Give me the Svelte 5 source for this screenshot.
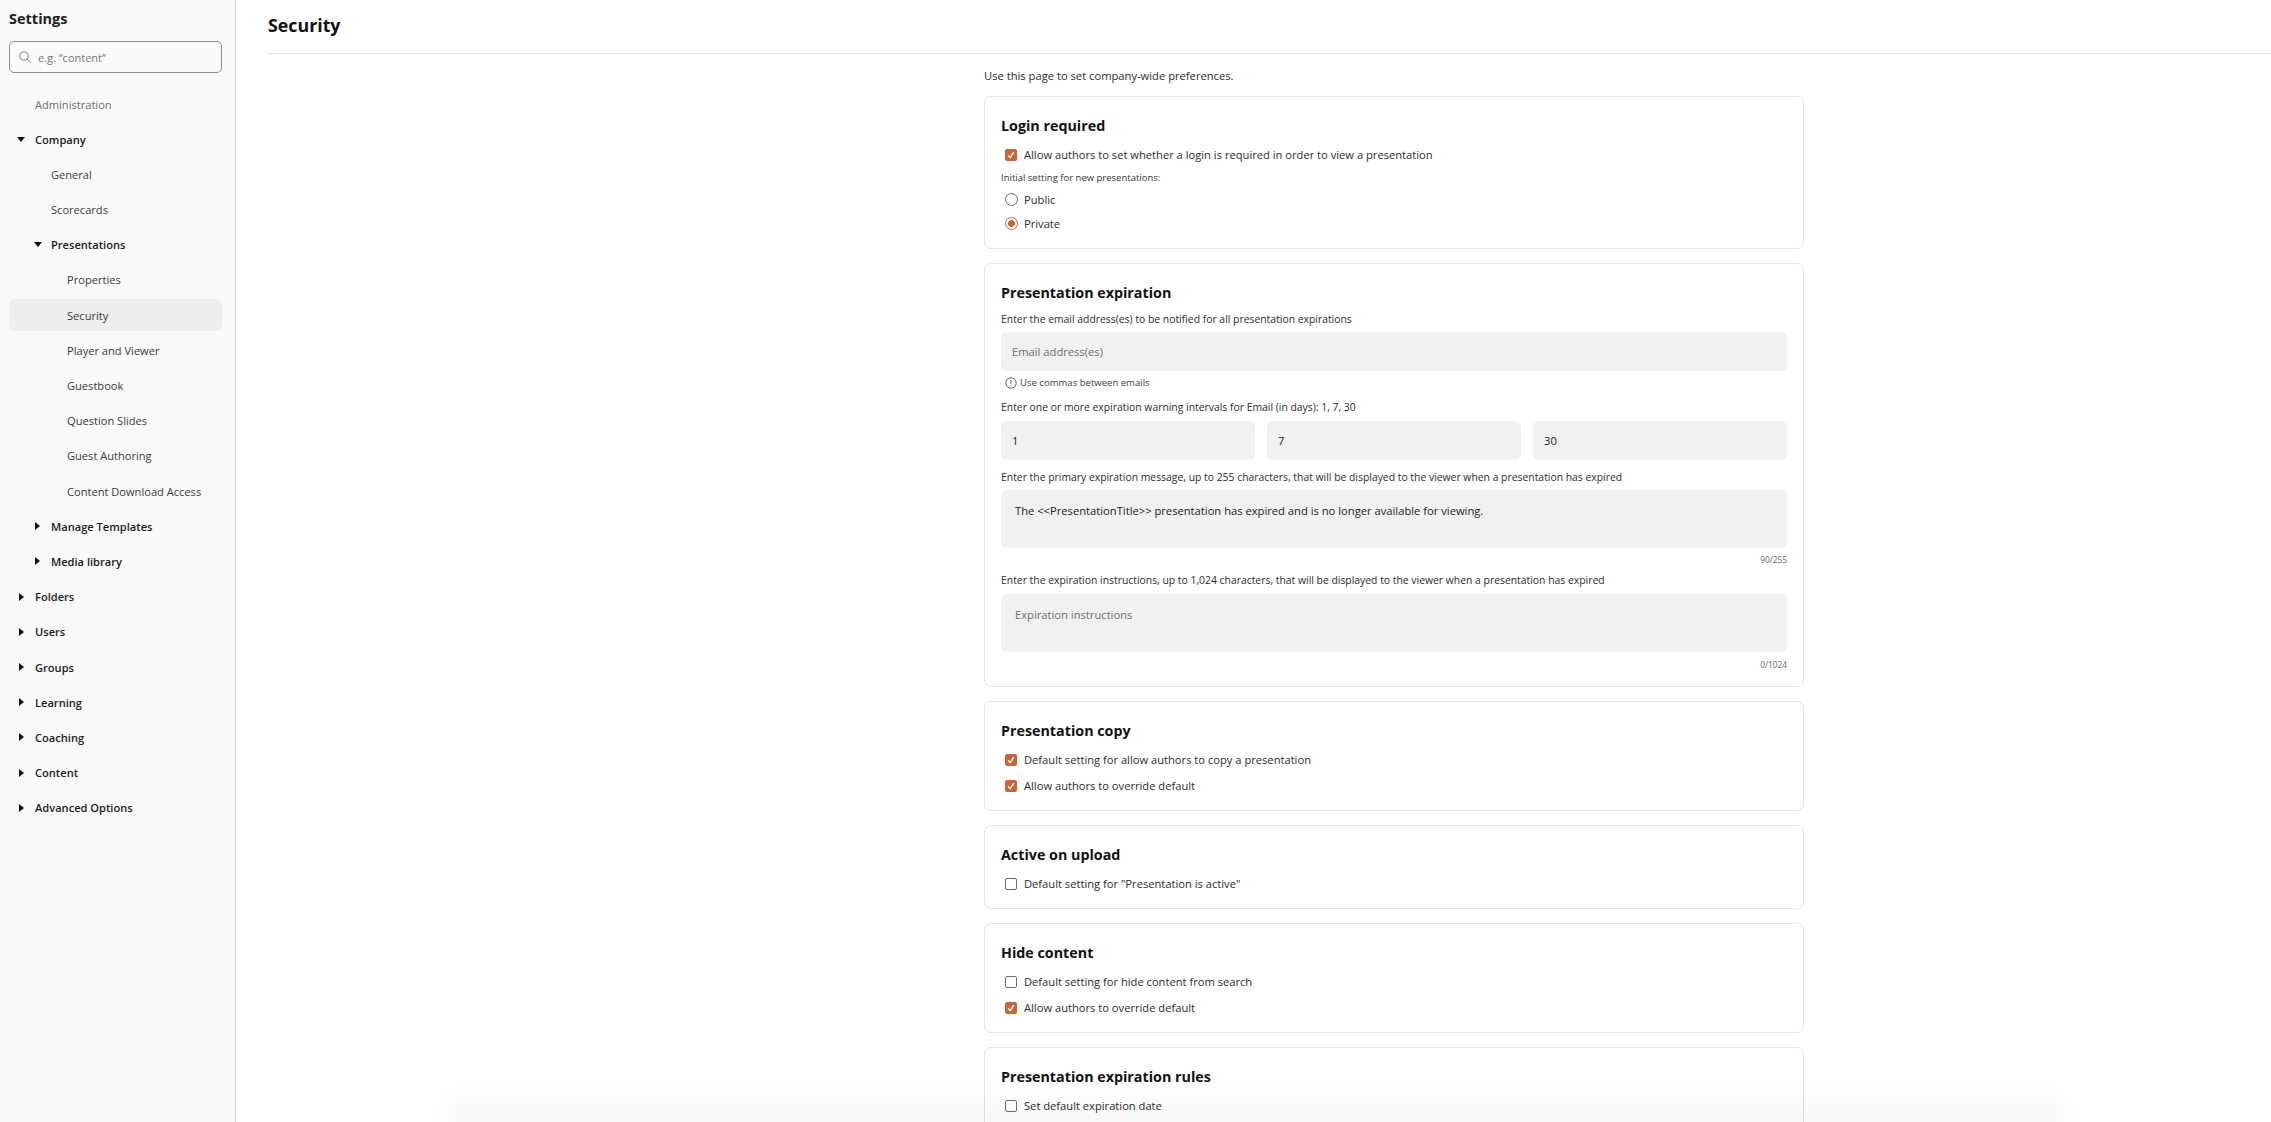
<script>
  const company = [
    { label: "General", level: 2 },
    { label: "Scorecards", level: 2 },
    { label: "Presentations", level: 2, bold: true, open: true },
    { label: "Properties", level: 3 },
    { label: "Security", level: 3, active: true },
    { label: "Player and Viewer", level: 3 },
    { label: "Guestbook", level: 3 },
    { label: "Question Slides", level: 3 },
    { label: "Guest Authoring", level: 3 },
    { label: "Content Download Access", level: 3 },
    { label: "Manage Templates", level: 2, bold: true, closed: true },
    { label: "Media library", level: 2, bold: true, closed: true },
  ];
  const nav = [
    { label: "Administration", level: 1, muted: true },
    { label: "Company", level: 1, bold: true, open: true },
    ...company,
    ...["Folders", "Users", "Groups", "Learning", "Coaching", "Content", "Advanced Options"].map((label) => ({
      label,
      level: 1,
      bold: true,
      closed: true,
    })),
  ];

  let loginMode = $state("private");
  let primaryMessage = $state("The <<PresentationTitle>> presentation has expired and is no longer available for viewing.");
</script>

<div class="layout">
  <aside class="sidebar">
    <h2>Settings</h2>
    <div class="search">
      <svg width="12" height="12" viewBox="0 0 14 14" fill="none" stroke="#7a7a7a" stroke-width="1.1">
        <circle cx="5.8" cy="5.8" r="4.8" />
        <path d="M9.3 9.3 L13.4 13.4" />
      </svg>
      <span>e.g. “content”</span>
    </div>
    <nav>
      {#each nav as item}
        <div class="nav-item level-{item.level}" class:bold={item.bold} class:muted={item.muted} class:active={item.active}>
          {#if item.open}
            <svg class="caret down" width="8" height="5" viewBox="0 0 8 5"><path d="M0 0 H8 L4 5 Z" fill="#111" /></svg>
          {:else if item.closed}
            <svg class="caret right" width="5" height="8" viewBox="0 0 5 8"><path d="M0 0 V8 L5 4 Z" fill="#111" /></svg>
          {/if}
          <span>{item.label}</span>
        </div>
      {/each}
    </nav>
  </aside>

  <main>
    <header><h1>Security</h1></header>
    <div class="content">
      <p class="intro">Use this page to set company-wide preferences.</p>

      <section class="card login">
        <h3>Login required</h3>
        <label class="check"><span class="box on"><svg width="8" height="8" viewBox="0 0 8 8"><path d="M1.2 4.4 L3.2 6.6 L6.8 1.2" fill="none" stroke="#fff" stroke-width="1.4" /></svg></span>Allow authors to set whether a login is required in order to view a presentation</label>
        <p class="small-label">Initial setting for new presentations:</p>
        <button class="radio" onclick={() => (loginMode = "public")}><span class="dot" class:on={loginMode === "public"}></span>Public</button>
        <button class="radio" onclick={() => (loginMode = "private")}><span class="dot" class:on={loginMode === "private"}></span>Private</button>
      </section>

      <section class="card expiration">
        <h3>Presentation expiration</h3>
        <p class="field-label">Enter the email address(es) to be notified for all presentation expirations</p>
        <input class="field" placeholder="Email address(es)" />
        <p class="hint">
          <svg width="12" height="12" viewBox="0 0 12 12" fill="none" stroke="#555" stroke-width="0.9">
            <circle cx="6" cy="6" r="5.2" />
            <path d="M6 3 V7.2 M6 8.2 V9.2" />
          </svg>
          Use commas between emails
        </p>
        <p class="field-label gap-a">Enter one or more expiration warning intervals for Email (in days): 1, 7, 30</p>
        <div class="intervals">
          <input class="field" value="1" />
          <input class="field" value="7" />
          <input class="field" value="30" />
        </div>
        <p class="field-label gap-b">Enter the primary expiration message, up to 255 characters, that will be displayed to the viewer when a presentation has expired</p>
        <textarea class="area" bind:value={primaryMessage}></textarea>
        <p class="count">90/255</p>
        <p class="field-label gap-c">Enter the expiration instructions, up to 1,024 characters, that will be displayed to the viewer when a presentation has expired</p>
        <textarea class="area" placeholder="Expiration instructions"></textarea>
        <p class="count last">0/1024</p>
      </section>

      <section class="card">
        <h3>Presentation copy</h3>
        <label class="check"><span class="box on"><svg width="8" height="8" viewBox="0 0 8 8"><path d="M1.2 4.4 L3.2 6.6 L6.8 1.2" fill="none" stroke="#fff" stroke-width="1.4" /></svg></span>Default setting for allow authors to copy a presentation</label>
        <label class="check"><span class="box on"><svg width="8" height="8" viewBox="0 0 8 8"><path d="M1.2 4.4 L3.2 6.6 L6.8 1.2" fill="none" stroke="#fff" stroke-width="1.4" /></svg></span>Allow authors to override default</label>
      </section>

      <section class="card">
        <h3>Active on upload</h3>
        <label class="check"><span class="box"></span>Default setting for "Presentation is active"</label>
      </section>

      <section class="card">
        <h3>Hide content</h3>
        <label class="check"><span class="box"></span>Default setting for hide content from search</label>
        <label class="check"><span class="box on"><svg width="8" height="8" viewBox="0 0 8 8"><path d="M1.2 4.4 L3.2 6.6 L6.8 1.2" fill="none" stroke="#fff" stroke-width="1.4" /></svg></span>Allow authors to override default</label>
      </section>

      <section class="card">
        <h3>Presentation expiration rules</h3>
        <label class="check"><span class="box"></span>Set default expiration date</label>
      </section>
    </div>
  </main>
  <div class="bottom-shade"></div>
</div>

<style>
  :global(body) {
    margin: 0;
    background: #fff;
    font-family: "Open Sans", sans-serif;
    color: #222;
  }

  .layout {
    position: relative;
    display: flex;
    height: 1122px;
    overflow: hidden;
  }

  .sidebar {
    box-sizing: border-box;
    flex: 0 0 236px;
    padding: 9px 0 0 9px;
    background: #f9f9f9;
    border-right: 1px solid #dedede;
  }

  .sidebar h2 {
    margin: 0 0 12px;
    font-size: 14.5px;
    line-height: 20px;
    font-weight: 700;
    color: #222;
  }

  .search {
    box-sizing: border-box;
    display: flex;
    align-items: center;
    gap: 7px;
    width: 213px;
    height: 32px;
    padding-left: 9px;
    border: 1px solid #8c8c8c;
    border-radius: 5px;
    background: #fafafa;
    font-size: 11px;
    color: #757575;
  }

  nav {
    margin-top: 15px;
    width: 213px;
  }

  .nav-item {
    position: relative;
    box-sizing: border-box;
    display: flex;
    align-items: center;
    height: 32px;
    margin-bottom: 3.2px;
    border-radius: 6px;
    font-size: 11.1px;
    color: #3a3a3a;
  }

  .level-1 { padding-left: 26px; }
  .level-2 { padding-left: 42px; }
  .level-3 { padding-left: 58px; }

  .bold {
    font-weight: 600;
    color: #1c1c1c;
  }

  .muted { color: #6e6e6e; }
  .active { background: #eeeeee; }

  .caret { position: absolute; }
  .caret.down { left: 8px; }
  .caret.right { left: 10px; }
  .level-2 .caret.down { left: 25px; }
  .level-2 .caret.right { left: 26px; }

  main {
    flex: 1;
    min-width: 0;
    padding-left: 32px;
  }

  header {
    height: 53px;
    border-bottom: 1px solid #e4e4e4;
  }

  h1 {
    margin: 0;
    padding-top: 11px;
    font-size: 17.8px;
    line-height: 28px;
    font-weight: 700;
    color: #111;
  }

  .content {
    width: 820px;
    margin-left: 716px;
  }

  .intro {
    box-sizing: border-box;
    height: 31px;
    margin: 0 0 11px;
    padding-top: 12px;
    font-size: 11.2px;
    line-height: 20px;
    color: #2c2c2c;
  }

  .card {
    box-sizing: border-box;
    padding: 17px 16px 7.5px;
    margin-bottom: 14px;
    border: 1px solid #e4e4e4;
    border-radius: 7px;
    background: #fff;
  }

  .login { padding-bottom: 10px; }
  .expiration { padding-bottom: 13px; }

  h3 {
    margin: 0 0 7.5px;
    font-size: 14.3px;
    line-height: 24px;
    font-weight: 700;
    color: #111;
  }

  .expiration h3 { margin-bottom: 6px; }

  .check {
    display: flex;
    align-items: center;
    height: 18px;
    margin: 0 0 8px;
    font-size: 11.17px;
    color: #2c2c2c;
  }

  .box {
    box-sizing: border-box;
    display: flex;
    align-items: center;
    justify-content: center;
    width: 12px;
    height: 12px;
    margin: 0 7px 0 4px;
    border: 1px solid #6e6e6e;
    border-radius: 2px;
    background: #fff;
  }

  .box.on {
    border: 0;
    background: #c8663a;
  }

  .small-label {
    margin: -1.5px 0 4px;
    font-size: 9.5px;
    line-height: 16px;
    color: #333;
  }

  .radio {
    display: flex;
    align-items: center;
    width: 100%;
    height: 18px;
    margin: 0 0 6px;
    padding: 0;
    border: 0;
    background: none;
    font: inherit;
    font-size: 11.17px;
    color: #2c2c2c;
  }

  .dot {
    box-sizing: border-box;
    width: 13px;
    height: 13px;
    margin: 0 6px 0 4px;
    border: 1px solid #6e6e6e;
    border-radius: 50%;
  }

  .dot.on {
    border-color: #c8663a;
    background: radial-gradient(circle, #c8663a 0 3.2px, #fff 3.7px);
  }

  .field-label {
    margin: 0 0 5px;
    font-size: 10.38px;
    line-height: 16px;
    color: #2c2c2c;
  }

  .field {
    box-sizing: border-box;
    display: block;
    width: 100%;
    height: 39px;
    padding: 0 11px;
    border: 0;
    border-radius: 6px;
    background: #f1f1f1;
    font-family: inherit;
    font-size: 11.2px;
    color: #222;
  }

  .field::placeholder,
  .area::placeholder {
    color: #6e6e6e;
    opacity: 1;
  }

  .hint {
    display: flex;
    align-items: center;
    gap: 3px;
    margin: 4px 0 0 4px;
    font-size: 9.55px;
    line-height: 16px;
    color: #444;
  }

  .gap-a { margin-top: 8px; margin-bottom: 6px; }
  .gap-b { margin-top: 9px; }
  .gap-c { margin-top: 4px; margin-bottom: 6px; }

  .intervals {
    display: grid;
    grid-template-columns: repeat(3, 1fr);
    gap: 12px;
  }

  .area {
    box-sizing: border-box;
    display: block;
    width: 100%;
    height: 58px;
    padding: 13px 14px;
    border: 0;
    border-radius: 6px;
    background: #f1f1f1;
    font-family: inherit;
    font-size: 11.2px;
    line-height: 16px;
    color: #222;
    resize: none;
  }

  .count {
    margin: 4px 0 0;
    text-align: right;
    font-size: 8.3px;
    line-height: 16px;
    color: #666;
  }

  .count.last { margin-top: 5px; }

  .bottom-shade {
    position: absolute;
    left: 450px;
    right: 210px;
    bottom: -6px;
    height: 36px;
    background: linear-gradient(to bottom, rgba(0, 0, 0, 0), rgba(0, 0, 0, 0.05));
    filter: blur(10px);
    pointer-events: none;
  }
</style>
